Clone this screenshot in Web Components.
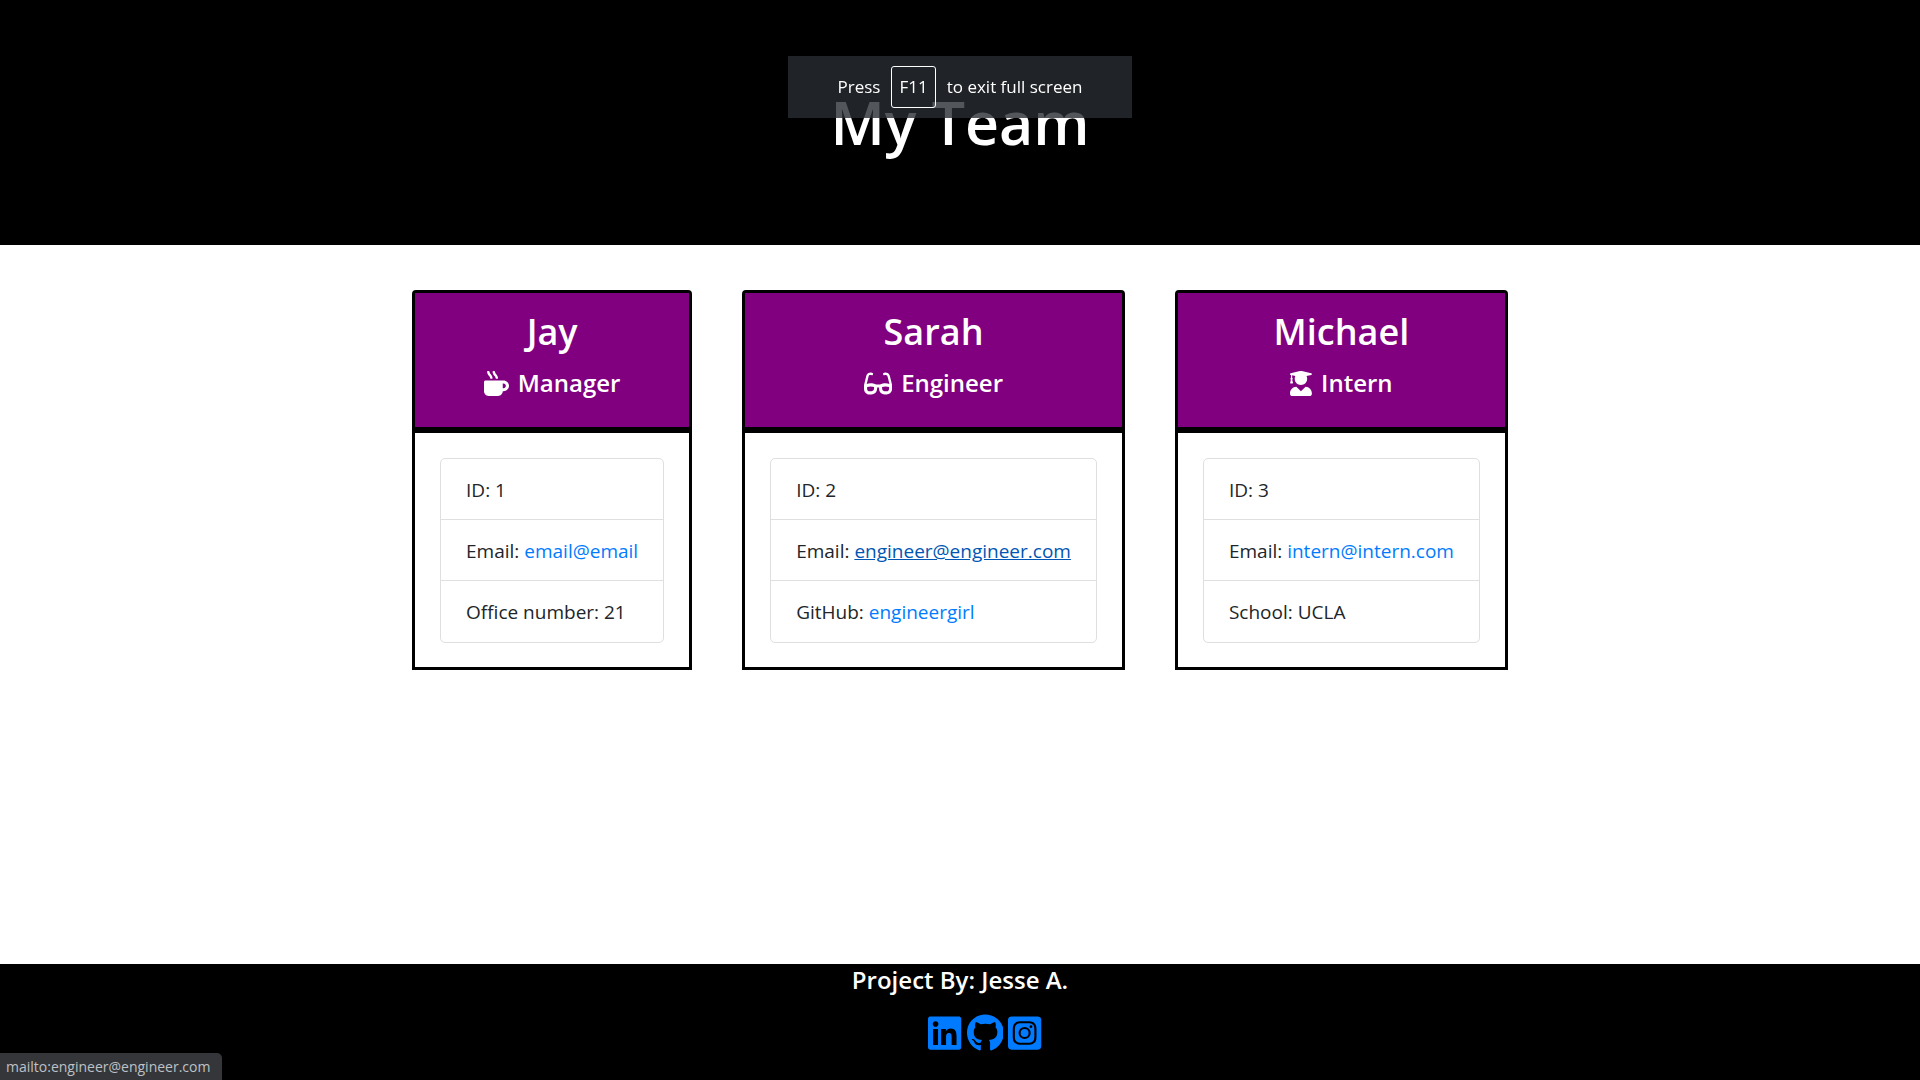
<!DOCTYPE html>
<html lang="en">
<head>
<meta charset="utf-8">
<title>My Team</title>
<style>
  html, body { margin: 0; }
  body { font-family: "Open Sans", "Noto Sans", sans-serif; font-size: 19px; line-height: 30px; color: #212529; background: #fff; }
</style>
</head>
<body>
<team-page>
  <page-banner slot="banner">My Team</page-banner>
  <member-card name="Jay" role-name="Manager" icon="mug">
    <member-field>ID: 1</member-field>
    <member-field>Email: <text-link href="mailto:email@email">email@email</text-link></member-field>
    <member-field>Office number: 21</member-field>
  </member-card>
  <member-card name="Sarah" role-name="Engineer" icon="glasses">
    <member-field>ID: 2</member-field>
    <member-field>Email: <text-link active href="mailto:engineer@engineer.com">engineer@engineer.com</text-link></member-field>
    <member-field>GitHub: <text-link href="https://github.com/engineergirl">engineergirl</text-link></member-field>
  </member-card>
  <member-card name="Michael" role-name="Intern" icon="graduate">
    <member-field>ID: 3</member-field>
    <member-field>Email: <text-link href="mailto:intern@intern.com">intern@intern.com</text-link></member-field>
    <member-field>School: UCLA</member-field>
  </member-card>
  <page-footer slot="footer">Project By: Jesse A.</page-footer>
</team-page>
<fullscreen-hint></fullscreen-hint>
<status-bubble>mailto:engineer@engineer.com</status-bubble>

<script>
const ICONS = {
  mug: [512, 'M127.1 146.5c1.3 7.7 8 13.5 16 13.5h16.5c9.8 0 17.6-8.5 16.3-18-3.8-28.2-16.4-54.2-36.6-74.7-14.4-14.7-23.6-33.3-26.4-53.5C111.8 5.9 105 0 96.8 0H80.4C70.6 0 63 8.5 64.1 18c3.9 31.9 18 61.3 40.6 84.4 12 12.2 19.7 27.5 22.4 44.1zm112 0c1.3 7.7 8 13.5 16 13.5h16.5c9.8 0 17.6-8.5 16.3-18-3.8-28.2-16.4-54.2-36.6-74.7-14.4-14.7-23.6-33.3-26.4-53.5C223.8 5.9 217 0 208.8 0h-16.4c-9.8 0-17.5 8.5-16.3 18 3.9 31.9 18 61.3 40.6 84.4 12 12.2 19.7 27.5 22.4 44.1zM400 192H32c-17.7 0-32 14.3-32 32v192c0 53 43 96 96 96h192c53 0 96-43 96-96h16c61.8 0 112-50.2 112-112s-50.2-112-112-112zm0 160h-16v-96h16c26.5 0 48 21.5 48 48s-21.5 48-48 48z'],
  glasses: [576, 'M574.1 280.37L528.75 98.66c-5.91-23.7-21.59-44.05-43-55.81-21.44-11.73-46.97-14.11-70.19-6.33l-15.25 5.08c-8.39 2.79-12.92 11.86-10.12 20.24l5.06 15.18c2.79 8.38 11.85 12.91 20.23 10.12l13.18-4.39c10.87-3.62 23-3.57 33.16 1.73 10.29 5.37 17.57 14.56 20.37 25.82l38.46 153.82c-22.19-6.81-49.79-12.46-81.2-12.46-34.77 0-73.98 7.02-114.85 26.74h-73.18c-40.87-19.74-80.08-26.75-114.86-26.75-31.42 0-59.02 5.65-81.21 12.46l38.46-153.83c2.79-11.25 10.09-20.45 20.38-25.81 10.16-5.3 22.28-5.35 33.15-1.73l13.17 4.39c8.38 2.79 17.44-1.74 20.23-10.12l5.06-15.18c2.8-8.38-1.73-17.45-10.12-20.24l-15.25-5.08c-23.22-7.78-48.75-5.41-70.19 6.33-21.41 11.77-37.09 32.11-43 55.81L1.9 280.37A64.218 64.218 0 0 0 0 295.86v70.25C0 429.01 51.58 480 115.2 480h37.12c60.28 0 110.37-45.94 114.88-105.37l2.93-38.63h35.75l2.93 38.63C313.31 434.06 363.4 480 423.68 480h37.12c63.62 0 115.2-50.99 115.2-113.88v-70.25c0-5.23-.64-10.43-1.9-15.5zm-370.72 89.42c-1.97 25.91-24.4 46.21-51.06 46.21H115.2C86.97 416 64 393.62 64 366.11v-37.54c18.12-6.49 43.42-12.92 72.58-12.92 23.86 0 47.26 4.33 69.93 12.92l-3.13 41.22zM512 366.12c0 27.51-22.97 49.88-51.2 49.88h-37.12c-26.67 0-49.1-20.3-51.06-46.21l-3.13-41.22c22.67-8.59 46.08-12.92 69.95-12.92 29.12 0 54.43 6.44 72.55 12.93v37.54z'],
  graduate: [448, 'M319.4 320.6L224 416l-95.4-95.4C57.1 323.7 0 382.2 0 454.4v9.6c0 26.5 21.5 48 48 48h352c26.5 0 48-21.5 48-48v-9.6c0-72.2-57.1-130.7-128.6-133.8zM13.6 79.8l6.4 1.5v58.4c-7 4.2-12 11.5-12 20.3 0 8.4 4.6 15.4 11.1 19.7L3.5 242c-1.7 6.9 2.1 14 7.6 14h41.8c5.5 0 9.3-7.1 7.6-14l-15.6-62.3C51.4 175.4 56 168.4 56 160c0-8.8-5-16.1-12-20.3V87.1l66 15.9c-8.6 17.2-14 36.4-14 57 0 70.7 57.3 128 128 128s128-57.3 128-128c0-20.6-5.3-39.8-14-57l96.3-23.2c18.2-4.4 18.2-27.1 0-31.5l-190.4-46c-13-3.1-26.7-3.1-39.7 0L13.6 48.2c-18.1 4.4-18.1 27.2 0 31.6z'],
  linkedin: [448, 'M416 32H31.9C14.3 32 0 46.5 0 64.3v383.4C0 465.5 14.3 480 31.9 480H416c17.6 0 32-14.5 32-32.3V64.3c0-17.8-14.4-32.3-32-32.3zM135.4 416H69V202.2h66.5V416zm-33.2-243c-21.3 0-38.5-17.3-38.5-38.5S80.9 96 102.2 96c21.2 0 38.5 17.3 38.5 38.5 0 21.3-17.2 38.5-38.5 38.5zm282.1 243h-66.4V312c0-24.8-.5-56.7-34.5-56.7-34.6 0-39.9 27-39.9 54.9V416h-66.4V202.2h63.7v29.2h.9c8.9-16.8 30.6-34.5 62.9-34.5 67.2 0 79.7 44.3 79.7 101.9V416z'],
  github: [496, 'M244.8 8C106.1 8 0 113.3 0 252c0 110.9 69.8 205.8 169.5 239.2 12.8 2.3 17.3-5.6 17.3-12.1 0-6.2-.3-40.4-.3-61.4 0 0-70 15-84.7-29.8 0 0-11.4-29.1-27.8-36.6 0 0-22.9-15.7 1.6-15.4 0 0 24.9 2 38.6 25.8 21.9 38.6 58.6 27.5 72.9 20.9 2.3-16 8.8-27.1 16-33.7-55.9-6.2-112.3-14.3-112.3-110.5 0-27.5 7.6-41.3 23.6-58.9-2.6-6.5-11.1-33.3 2.6-67.9 20.9-6.5 69 27 69 27 20-5.6 41.5-8.5 62.8-8.5s42.8 2.9 62.8 8.5c0 0 48.1-33.6 69-27 13.7 34.7 5.2 61.4 2.6 67.9 16 17.7 25.8 31.5 25.8 58.9 0 96.5-58.9 104.2-114.8 110.5 9.2 7.9 17 22.9 17 46.4 0 33.7-.3 75.4-.3 83.6 0 6.5 4.6 14.4 17.3 12.1C428.2 457.8 496 362.9 496 252 496 113.3 383.5 8 244.8 8z'],
  instagram: [448, 'M224 202.66A53.34 53.34 0 1 0 277.36 256 53.38 53.38 0 0 0 224 202.66Zm124.71-41a54 54 0 0 0-30.41-30.41c-21-8.29-71-6.43-94.3-6.43s-73.25-1.93-94.31 6.43a54 54 0 0 0-30.41 30.41c-8.28 21-6.43 71.05-6.43 94.33S91 329.26 99.32 350.33a54 54 0 0 0 30.41 30.41c21 8.29 71 6.43 94.31 6.43s73.24 1.93 94.3-6.43a54 54 0 0 0 30.41-30.41c8.35-21 6.43-71.05 6.43-94.33S357.1 182.74 348.75 161.67ZM224 338a82 82 0 1 1 82-82A81.9 81.9 0 0 1 224 338Zm85.38-148.3a19.14 19.14 0 1 1 19.13-19.14A19.1 19.1 0 0 1 309.42 189.74ZM400 32H48A48 48 0 0 0 0 80V432a48 48 0 0 0 48 48H400a48 48 0 0 0 48-48V80A48 48 0 0 0 400 32ZM382.88 322c-1.29 25.63-7.14 48.34-25.85 67s-41.4 24.63-67 25.85c-26.41 1.49-105.59 1.49-132 0-25.63-1.29-48.26-7.15-67-25.85s-24.63-41.42-25.85-67c-1.49-26.42-1.49-105.61 0-132 1.29-25.63 7.07-48.34 25.85-67s41.47-24.56 67-25.78c26.41-1.49 105.59-1.49 132 0 25.63 1.29 48.33 7.15 67 25.85s24.63 41.42 25.85 67.05C384.37 216.44 384.37 295.56 382.88 322Z']
};

class BaseElement extends HTMLElement {
  connectedCallback() {
    if (this.shadowRoot) return;
    this.attachShadow({ mode: 'open' }).innerHTML = this.render();
  }
}

class GlyphIcon extends BaseElement {
  render() {
    const [width, path] = ICONS[this.getAttribute('name')];
    return `<style>:host{display:block;height:var(--icon-size,25px)} svg{display:block;height:100%;width:auto}</style>
      <svg viewBox="0 0 ${width} 512" fill="currentColor" aria-hidden="true"><path d="${path}"/></svg>`;
  }
}

class TextLink extends BaseElement {
  render() {
    return `<style>
      :host{display:inline}
      a{color:#007bff;text-decoration:none}
      a:hover,:host([active]) a{color:#0056b3;text-decoration:underline}
    </style><a href="${this.getAttribute('href')}"><slot></slot></a>`;
  }
}

class PageBanner extends BaseElement {
  render() {
    return `<style>
      :host{display:block;background:#000;color:#fff;padding:85px 40px;text-align:center}
      h1{margin:0;font-size:59px;line-height:75px;font-weight:600}
    </style><h1><slot></slot></h1>`;
  }
}

class MemberField extends BaseElement {
  render() {
    return `<style>:host{display:block;padding:16px 25px 14px;border-bottom:1px solid #dfdfdf}
      :host(:last-child){border-bottom:0;padding-bottom:15px}</style><slot></slot>`;
  }
}

class MemberCard extends BaseElement {
  render() {
    return `<style>
      :host{display:block;border:3px solid #000;border-radius:4px 4px 0 0;background:#fff}
      header{background:#800080;color:#fff;text-align:center;padding:15px 25px;border-bottom:6px solid #000}
      h2{margin:0 0 12px;font-size:36px;line-height:48px;font-weight:600}
      h3{display:flex;justify-content:center;align-items:center;gap:9px;margin:0 0 14px;font-size:24px;line-height:30px;font-weight:600}
      .body{padding:25px 25px 24px}
      .list{border:1px solid #dfdfdf;border-radius:5px}
    </style>
    <header>
      <h2>${this.getAttribute('name')}</h2>
      <h3><glyph-icon name="${this.getAttribute('icon')}"></glyph-icon>${this.getAttribute('role-name')}</h3>
    </header>
    <div class="body"><div class="list"><slot></slot></div></div>`;
  }
}

class PageFooter extends BaseElement {
  render() {
    return `<style>
      :host{display:block;background:#000;color:#fff;text-align:center;padding:1px 0 28px}
      h5{margin:0 0 19px;font-size:24px;line-height:30px;font-weight:600}
      ul{display:flex;justify-content:center;gap:5px;margin:0;padding:0 0 0 50px;list-style:none;--icon-size:38px}
      a{display:block;color:#007bff}
    </style>
    <h5><slot></slot></h5>
    <ul>
      <li><a href="https://www.linkedin.com" aria-label="LinkedIn"><glyph-icon name="linkedin"></glyph-icon></a></li>
      <li><a href="https://github.com" aria-label="GitHub"><glyph-icon name="github"></glyph-icon></a></li>
      <li><a href="https://www.instagram.com" aria-label="Instagram"><glyph-icon name="instagram"></glyph-icon></a></li>
    </ul>`;
  }
}

class TeamPage extends BaseElement {
  render() {
    return `<style>
      :host{display:flex;flex-direction:column;min-height:100vh}
      main{flex:1;display:flex;flex-wrap:wrap;justify-content:center;align-items:flex-start;gap:50px;padding:45px 40px}
    </style>
    <slot name="banner"></slot><main><slot></slot></main><slot name="footer"></slot>`;
  }
}

class FullscreenHint extends BaseElement {
  render() {
    return `<style>
      :host{position:fixed;top:56px;left:0;right:0;display:flex;justify-content:center;pointer-events:none}
      div{display:flex;align-items:center;gap:11px;padding:10px 50px;background:rgba(40,44,49,.8);color:#fff;font-size:17px;line-height:24px}
      kbd{font:inherit;border:1px solid #fff;border-radius:3px;padding:8px 7px;line-height:24px}
    </style><div role="status"><span>Press</span><kbd>F11</kbd><span>to exit full screen</span></div>`;
  }
}

class StatusBubble extends BaseElement {
  render() {
    return `<style>
      :host{position:fixed;left:0;bottom:0;display:block;padding:3px 12px 2px 6px;border-radius:0 5px 0 0;background:#35363a;color:#bdc1c6;font-size:14px;line-height:22px}
    </style><slot></slot>`;
  }
}

customElements.define('glyph-icon', GlyphIcon);
customElements.define('text-link', TextLink);
customElements.define('page-banner', PageBanner);
customElements.define('member-field', MemberField);
customElements.define('member-card', MemberCard);
customElements.define('page-footer', PageFooter);
customElements.define('team-page', TeamPage);
customElements.define('fullscreen-hint', FullscreenHint);
customElements.define('status-bubble', StatusBubble);
</script>
</body>
</html>
